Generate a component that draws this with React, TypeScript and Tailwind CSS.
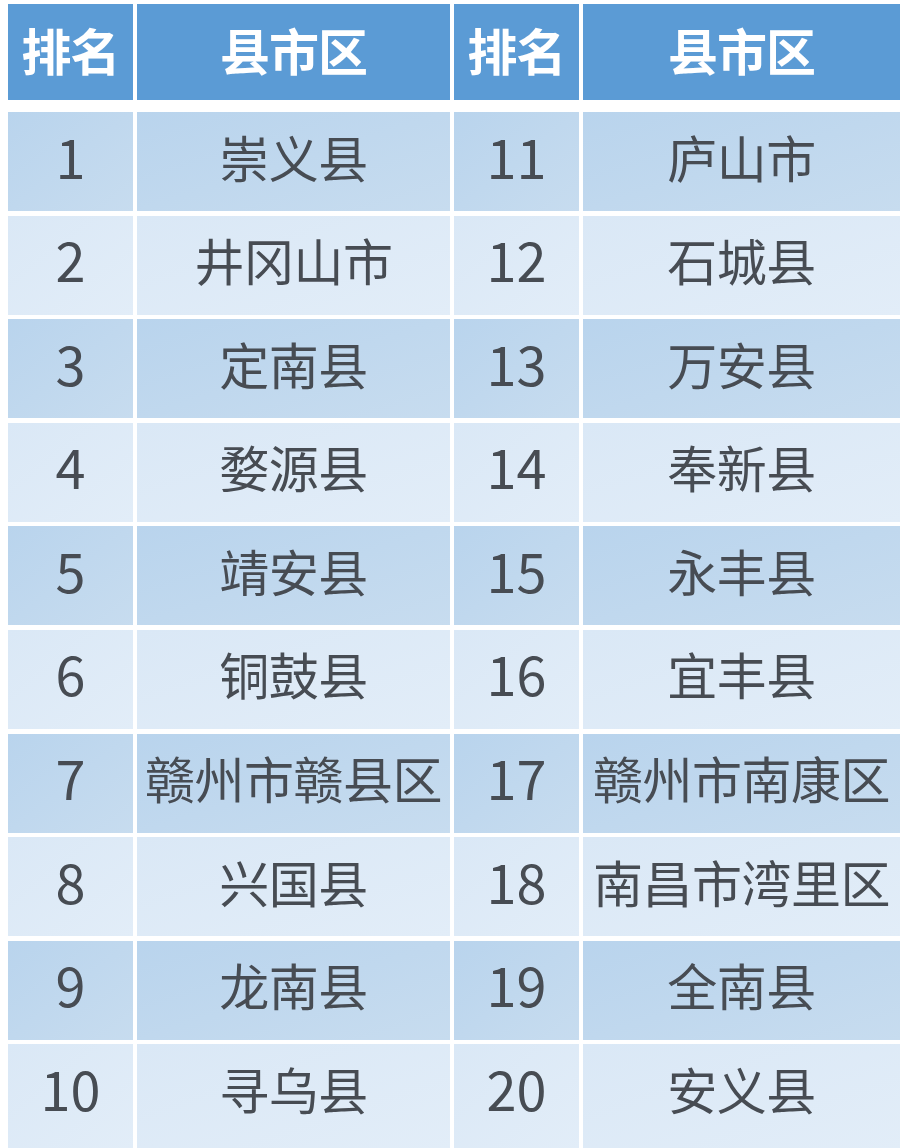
const rows: [string, string, string, string][] = [
  ["1", "崇义县", "11", "庐山市"],
  ["2", "井冈山市", "12", "石城县"],
  ["3", "定南县", "13", "万安县"],
  ["4", "婺源县", "14", "奉新县"],
  ["5", "靖安县", "15", "永丰县"],
  ["6", "铜鼓县", "16", "宜丰县"],
  ["7", "赣州市赣县区", "17", "赣州市南康区"],
  ["8", "兴国县", "18", "南昌市湾里区"],
  ["9", "龙南县", "19", "全南县"],
  ["10", "寻乌县", "20", "安义县"],
];

const cols = "grid grid-cols-[125px_313px_125px_317px] gap-x-[4px]";

export default function App() {
  return (
    <div className="w-[904px] h-[1148px] overflow-hidden bg-white pt-[4px] pl-[8px] font-['Noto_Sans_CJK_SC','Noto_Sans',sans-serif]">
      <div className={`${cols} h-[96px] text-white font-bold text-[50px]`}>
        {["排名", "县市区", "排名", "县市区"].map((h, i) => (
          <div key={i} className="bg-[#5b9bd5] flex items-center justify-center leading-none pb-[6px] tracking-[-1px]">
            {h}
          </div>
        ))}
      </div>

      <div className="flex flex-col gap-y-[4.6px] mt-[12px]">
        {rows.map((r, i) => {
          const last = i === rows.length - 1;
          return (
            <div key={i} className={`${cols} ${last ? "h-[106px]" : "h-[99px]"} text-[#474c53]`}>
              {r.map((c, j) => (
                <div
                  key={j}
                  className={`flex items-center justify-center leading-none whitespace-nowrap ${last ? "pb-[19px]" : "pb-[12px]"} ${
                    i % 2 === 0
                      ? "bg-gradient-to-br from-[#b9d4ed] to-[#c7dcef]"
                      : "bg-gradient-to-br from-[#dae8f6] to-[#e2edf8]"
                  } ${j % 2 === 0 ? "text-[54px]" : "text-[50px] tracking-[-0.5px]"}`}
                >
                  {c}
                </div>
              ))}
            </div>
          );
        })}
      </div>
    </div>
  );
}
